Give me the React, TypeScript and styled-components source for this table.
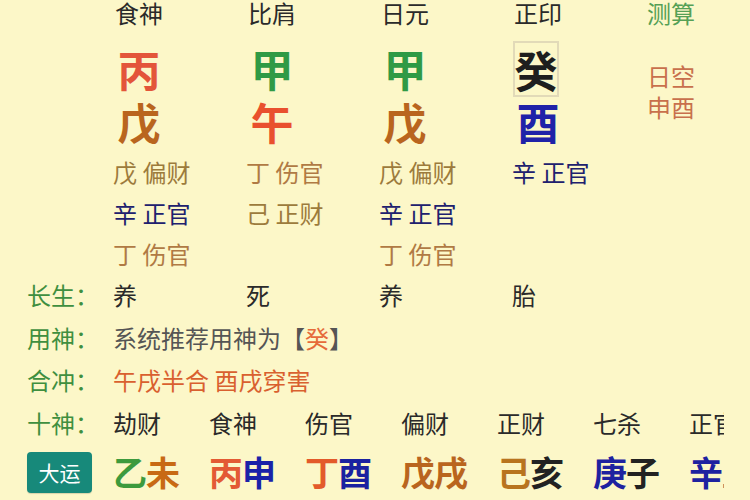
import React from "react";
import styled, { createGlobalStyle } from "styled-components";

const Global = createGlobalStyle`
  html, body { margin: 0; padding: 0; background: #fcf7c8; }
  body { font-family: "Noto Sans CJK SC", "Noto Sans", sans-serif; }
`;

const Page = styled.div`
  width: 724px;
  height: 500px;
  box-sizing: border-box;
  padding-left: 27px;
  overflow: hidden;
  background: #fcf7c8;
  color: #2a2a2a;
  white-space: nowrap;
`;

const Columns = styled.div`
  display: grid;
  grid-template-columns: 86px repeat(5, 133px);
`;

const HeaderRow = styled(Columns)`
  height: 26px;
  line-height: 26px;
  font-size: 24px;
`;

const HeaderCell = styled.div<{ $col: number; $color?: string }>`
  grid-column: ${(p) => p.$col};
  width: 52px;
  text-align: center;
  color: ${(p) => p.$color || "#2a2a2a"};
`;

const PillarGrid = styled(Columns)`
  margin-top: 16px;
  grid-template-rows: 53px 53px;
`;

const BigChar = styled.div<{ $col: number; $row: number; $color: string }>`
  grid-column: ${(p) => p.$col};
  grid-row: ${(p) => p.$row};
  width: 52px;
  display: flex;
  align-items: center;
  justify-content: center;
  font-size: 43px;
  font-weight: 700;
  line-height: 53px;
  color: ${(p) => p.$color};
`;

const Boxed = styled.span`
  display: inline-block;
  box-sizing: border-box;
  width: 46px;
  height: 56px;
  line-height: 52px;
  text-align: center;
  border: 2px solid #e2dab8;
  margin-left: -5px;
`;

const VoidCell = styled.div`
  grid-column: 6;
  grid-row: 1 / 3;
  width: 52px;
  padding-top: 18px;
  font-size: 24px;
  line-height: 31px;
  text-align: center;
  color: #c8704c;
`;

const HiddenGrid = styled(Columns)`
  margin-top: 3px;
  grid-auto-rows: 41px;
  font-size: 24px;
  line-height: 41px;
`;

const HiddenCell = styled.div<{ $col: number; $row: number; $color: string }>`
  grid-column: ${(p) => p.$col};
  grid-row: ${(p) => p.$row};
  color: ${(p) => p.$color};
`;

const InfoRow = styled(Columns)`
  height: 42.5px;
  line-height: 42.5px;
  font-size: 24px;
`;

const Label = styled.div`
  grid-column: 1;
  color: #3f8f3f;
`;

const Plain = styled.div<{ $col?: number; $span?: boolean; $color?: string }>`
  grid-column: ${(p) => (p.$span ? `${p.$col || 2} / -1` : p.$col || 2)};
  color: ${(p) => p.$color || "#2a2a2a"};
`;

const Tone = styled.span<{ $color: string }>`
  color: ${(p) => p.$color};
`;

const WideColumns = styled.div`
  display: grid;
  grid-template-columns: 86px repeat(7, 96px);
`;

const ShishenRow = styled(WideColumns)`
  height: 42.5px;
  line-height: 42.5px;
  font-size: 24px;
`;

const DayunRow = styled(WideColumns)`
  height: 56px;
  align-items: center;
`;

const Badge = styled.div`
  width: 65px;
  height: 41px;
  border-radius: 4px;
  background: #17897a;
  color: #ffffff;
  font-size: 21px;
  display: flex;
  align-items: center;
  justify-content: center;
  box-shadow: 0 1px 1px rgba(0, 0, 0, 0.15);
`;

const DayunItem = styled.div`
  font-size: 34px;
  font-weight: 700;
  line-height: 40px;
  letter-spacing: -1px;
`;

const C = {
  fire: "#e3553a",
  wood: "#2f9a45",
  earth: "#b9651e",
  metal: "#1f22a8",
  black: "#1e1e1e",
  oliveBrown: "#9c7b3c",
  orangeBrown: "#b07a44",
  navy: "#20206e",
};

const headers = ["食神", "比肩", "日元", "正印"];

const stems: { ch: string; color: string; boxed?: boolean }[] = [
  { ch: "丙", color: C.fire },
  { ch: "甲", color: C.wood },
  { ch: "甲", color: C.wood },
  { ch: "癸", color: C.black, boxed: true },
];

const branches = [
  { ch: "戊", color: C.earth },
  { ch: "午", color: "#e9502e" },
  { ch: "戊", color: C.earth },
  { ch: "酉", color: C.metal },
];

const hidden: { col: number; row: number; text: string; color: string }[] = [
  { col: 2, row: 1, text: "戊 偏财", color: C.oliveBrown },
  { col: 2, row: 2, text: "辛 正官", color: C.navy },
  { col: 2, row: 3, text: "丁 伤官", color: C.orangeBrown },
  { col: 3, row: 1, text: "丁 伤官", color: C.orangeBrown },
  { col: 3, row: 2, text: "己 正财", color: C.oliveBrown },
  { col: 4, row: 1, text: "戊 偏财", color: C.oliveBrown },
  { col: 4, row: 2, text: "辛 正官", color: C.navy },
  { col: 4, row: 3, text: "丁 伤官", color: C.orangeBrown },
  { col: 5, row: 1, text: "辛 正官", color: C.navy },
];

const changsheng = ["养", "死", "养", "胎"];

const shishen = ["劫财", "食神", "伤官", "偏财", "正财", "七杀", "正官"];

const dayun: [string, string, string, string][] = [
  ["乙", "#3d9a3d", "未", "#c86a14"],
  ["丙", "#e35a34", "申", "#1a22a8"],
  ["丁", "#e35a2a", "酉", "#1a22a0"],
  ["戊", C.earth, "戌", C.earth],
  ["己", "#b8741e", "亥", "#222222"],
  ["庚", "#1e22a0", "子", "#222222"],
  ["辛", "#1e22a0", "丑", "#555555"],
];

export default function App() {
  return (
    <>
      <Global />
      <Page>
        <HeaderRow>
          {headers.map((h, i) => (
            <HeaderCell key={i} $col={i + 2}>
              {h}
            </HeaderCell>
          ))}
          <HeaderCell $col={6} $color="#55a055">
            测算
          </HeaderCell>
        </HeaderRow>

        <PillarGrid>
          {stems.map((s, i) => (
            <BigChar key={`s${i}`} $col={i + 2} $row={1} $color={s.color}>
              {s.boxed ? <Boxed>{s.ch}</Boxed> : s.ch}
            </BigChar>
          ))}
          {branches.map((b, i) => (
            <BigChar key={`b${i}`} $col={i + 2} $row={2} $color={b.color}>
              {b.ch}
            </BigChar>
          ))}
          <VoidCell>
            日空
            <br />
            申酉
          </VoidCell>
        </PillarGrid>

        <HiddenGrid>
          {hidden.map((h, i) => (
            <HiddenCell key={i} $col={h.col} $row={h.row} $color={h.color}>
              {h.text}
            </HiddenCell>
          ))}
        </HiddenGrid>

        <InfoRow>
          <Label>长生：</Label>
          {changsheng.map((c, i) => (
            <Plain key={i} $col={i + 2}>
              {c}
            </Plain>
          ))}
        </InfoRow>
        <InfoRow>
          <Label>用神：</Label>
          <Plain $span $color="#555555">
            系统推荐用神为【<Tone $color="#e66a3a">癸</Tone>】
          </Plain>
        </InfoRow>
        <InfoRow>
          <Label>合冲：</Label>
          <Plain $span $color="#d9602f">
            午戌半合 酉戌穿害
          </Plain>
        </InfoRow>

        <ShishenRow>
          <Label>十神：</Label>
          {shishen.map((s, i) => (
            <Plain key={i} $col={i + 2}>
              {s}
            </Plain>
          ))}
        </ShishenRow>

        <DayunRow>
          <Badge>大运</Badge>
          {dayun.map(([a, ac, b, bc], i) => (
            <DayunItem key={i}>
              <Tone $color={ac}>{a}</Tone>
              <Tone $color={bc}>{b}</Tone>
            </DayunItem>
          ))}
        </DayunRow>
      </Page>
    </>
  );
}
